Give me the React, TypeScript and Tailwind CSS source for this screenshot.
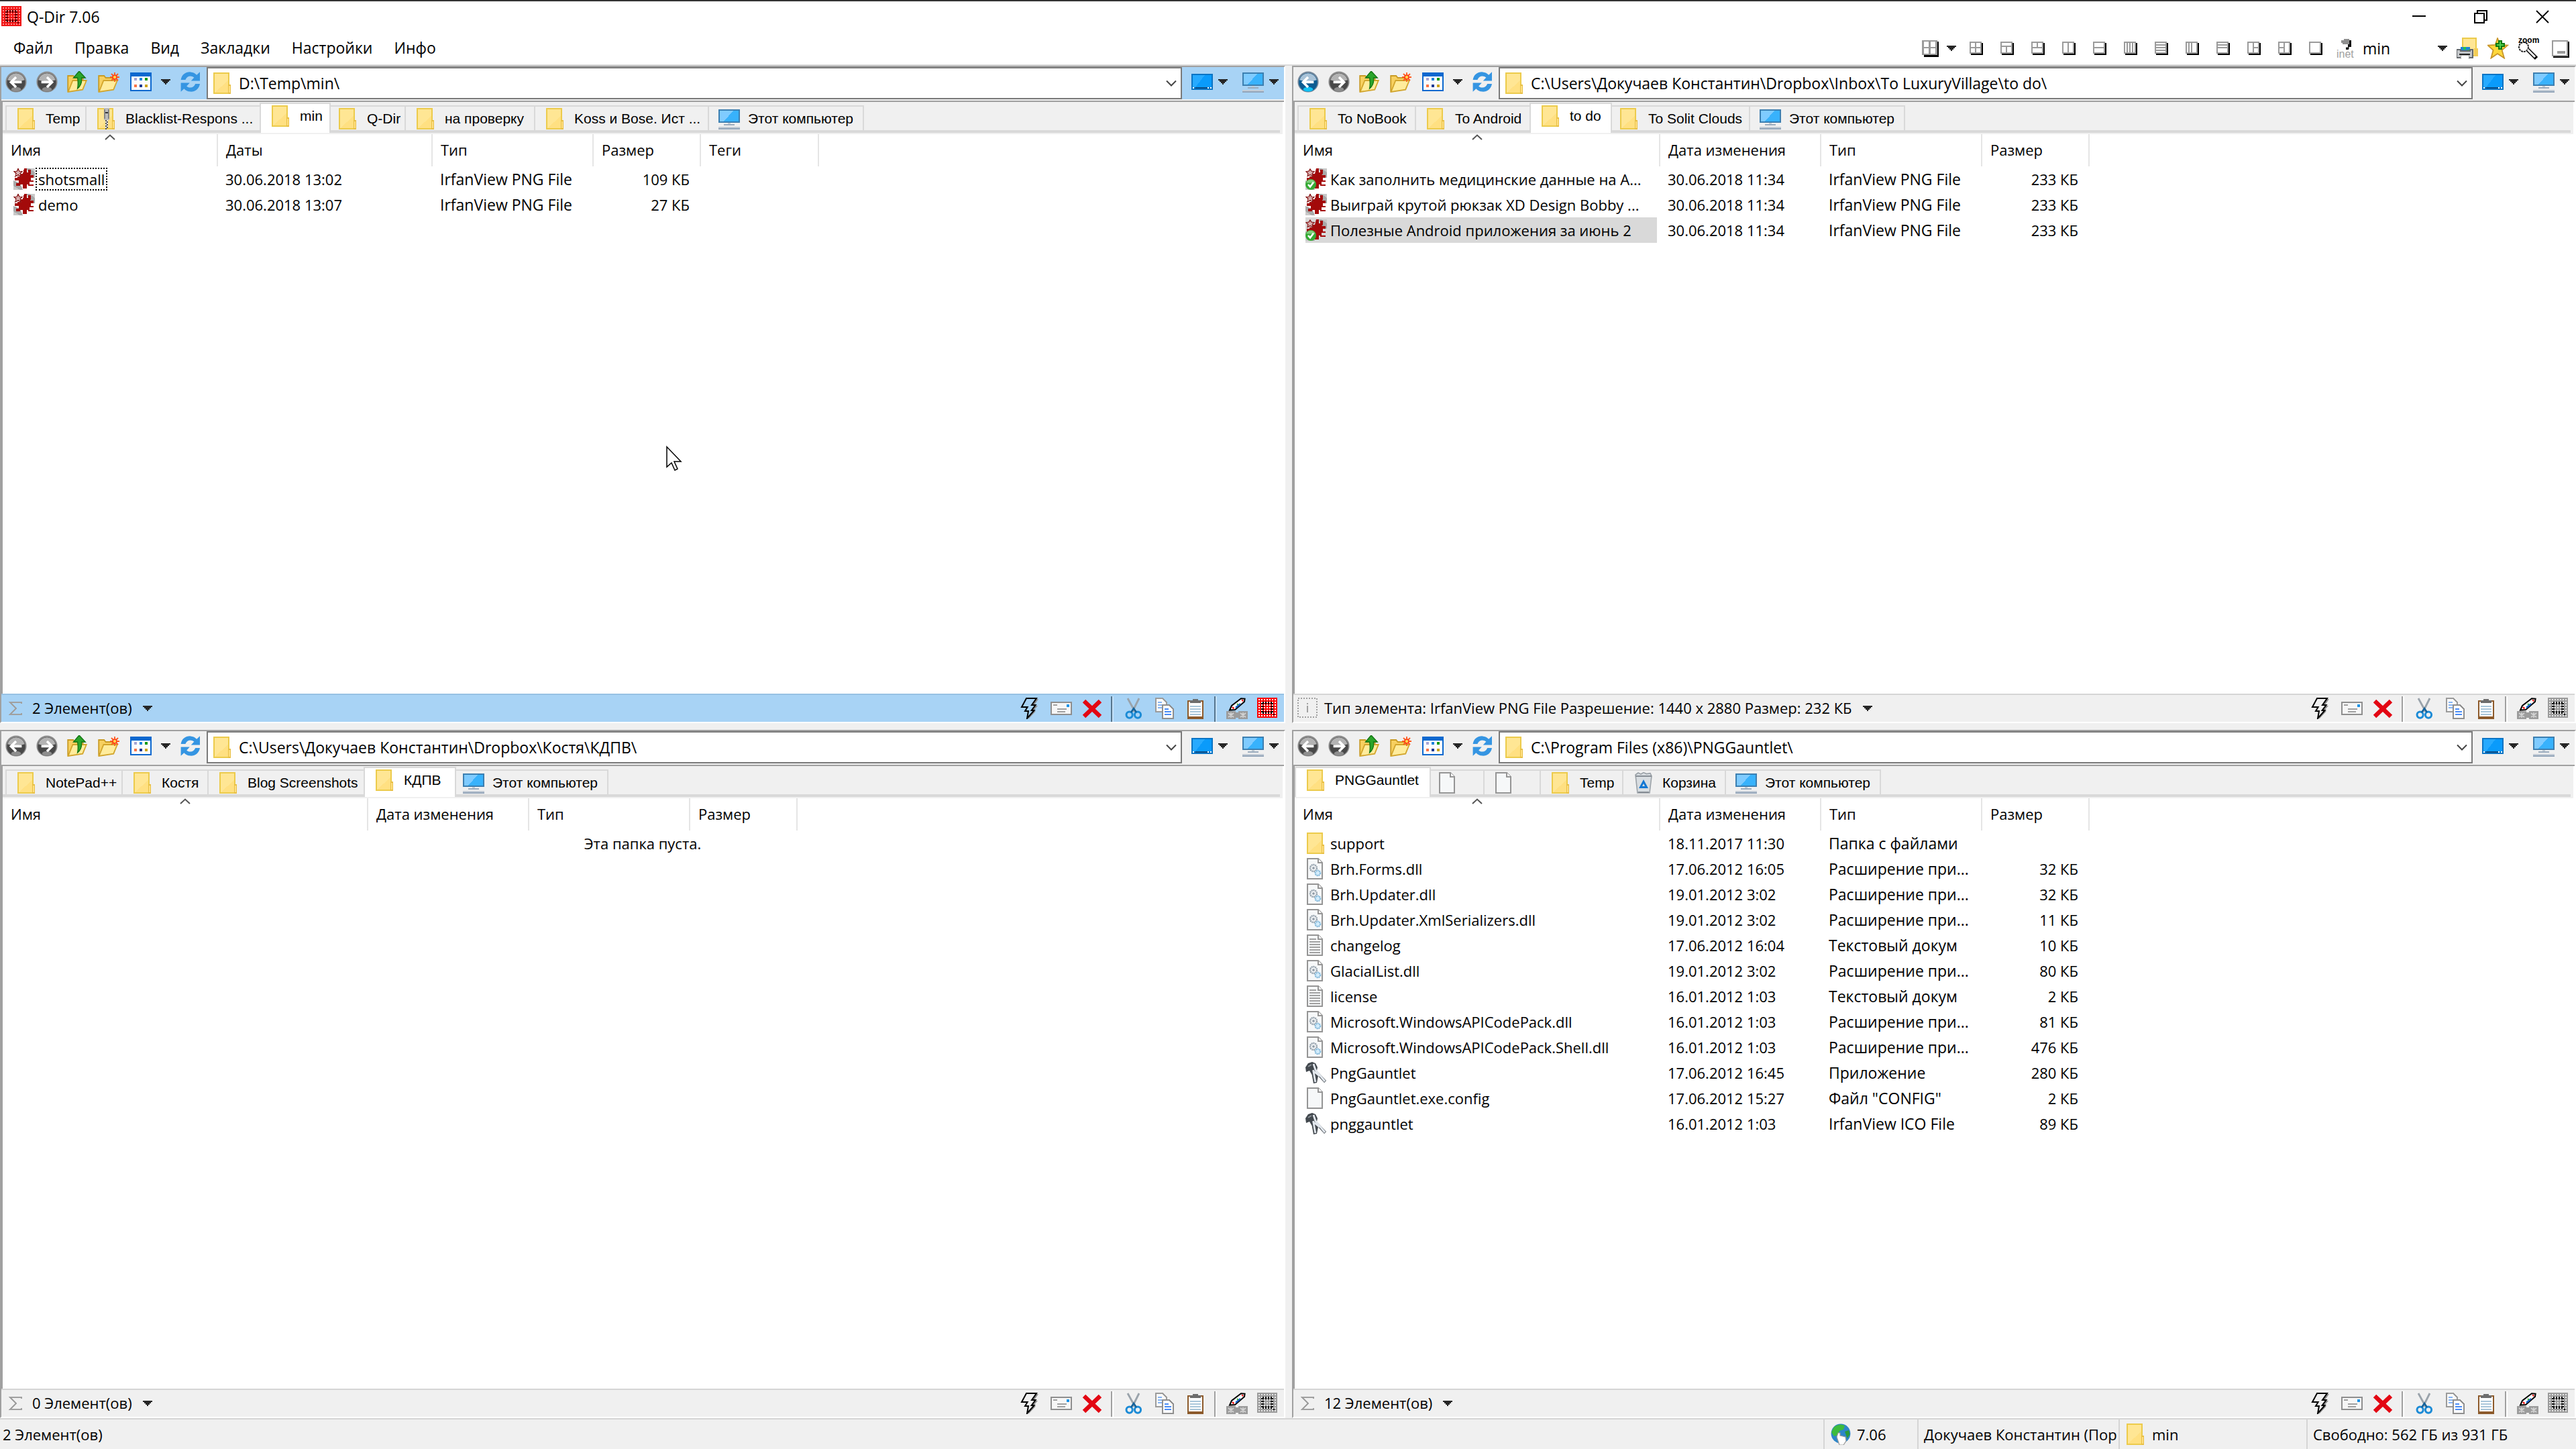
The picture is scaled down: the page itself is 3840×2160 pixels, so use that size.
import type { ReactNode } from "react";
import clsx from "clsx";

type IconName = "folder" | "zip" | "pc" | "bin" | "blank" | "dll" | "txt" | "irfan" | "irfanSynced" | "tool";

type Tab = { label: string; icon: IconName; width: string; selected?: boolean };
type Column = { title: string; width: string; sorted?: boolean };
type FileRow = { icon: IconName; name: string; date: string; type: string; size: string; state?: "focused" | "selected" };

function Svg({ children, crisp = true, className = "h-8 w-8" }: { children: ReactNode; crisp?: boolean; className?: string }) {
  return (
    <svg viewBox="0 0 16 16" className={clsx("shrink-0", className)} shapeRendering={crisp ? "crispEdges" : "auto"} aria-hidden="true">
      {children}
    </svg>
  );
}

/* ---------- file icons ---------- */

function FolderShape() {
  return (
    <>
      <path d="M1.5 .5h11v15h-11z" fill="#ffe694" stroke="#eccb4c" />
      <path d="M2 15h10V6z" fill="#ffe082" />
      <path d="M12 9h2v7h-2z" fill="#e8bf45" />
      <path d="M12.5 10h1v5h-1z" fill="#ffe084" />
    </>
  );
}

function PageShape() {
  return (
    <>
      <path d="M1.5 .5h8l3 3v12h-11z" fill="#f6f8f9" stroke="#959595" />
      <path d="M9.5 .5v3h3" fill="#fff" stroke="#959595" />
    </>
  );
}

function MonitorShape() {
  return (
    <>
      <path d="M0 1h16v10H0z" fill="#3c7fb1" />
      <path d="M1 2h14v8H1z" fill="#38b2fc" />
      <path d="M1 2h10L4 10H1z" fill="#7fcbff" />
      <path d="M7 11h2v1H7z" fill="#c5ccd3" />
      <path d="M4 12h8v1H4z" fill="#9aabbd" />
      <path d="M0 14h16v1H0z" fill="#c3ccd6" />
      <path d="M0 15h16v1H0z" fill="#93a5b9" />
    </>
  );
}

function IrfanShape() {
  return (
    <>
      <path d="M10 0h6v7l-4-1zM0 9l5 2 2 5H0z" fill="#a9a9a9" />
      <path d="M12 0h4v3zM0 13v3h5z" fill="#c9c9c9" />
      <path
        d="M8 0h2v3h1V1h2v3l-1 1h3v2h-2v2h2v1h-3v2h3v1h-4v-1h-1v3H7v-3H5v1H2v-2h2V9H1V7h2V6h2V4h2z"
        fill="#a30a0a"
      />
      <path d="M3.5 .5l1 1.6 2 .3-1.4 1.4.3 2-1.9-1-1.9 1 .3-2L.5 2.4l2-.3z" fill="#d9b0b0" stroke="#8c2222" strokeWidth=".7" />
    </>
  );
}

function FileIcon({ name }: { name: IconName }) {
  switch (name) {
    case "folder":
      return <Svg><FolderShape /></Svg>;
    case "zip":
      return (
        <Svg>
          <FolderShape />
          <path d="M6 0h4v9H6z" fill="#bcbcbc" />
          <path d="M6 1h1v7H6zM9 1h1v7H9z" fill="#858585" />
          <path d="M7 3h2v1H7z" fill="#333" />
          <path d="M7 9h1v1H7zM8 10h1v1H8zM7 11h1v1H7zM8 12h1v1H8zM7 13h1v1H7zM8 14h1v1H8zM7 15h1v1H7z" fill="#555" />
          <path d="M8 9h1v1H8zM7 10h1v1H7zM8 11h1v1H8zM7 12h1v1H7zM8 13h1v1H8zM7 14h1v1H7z" fill="#ddd" />
        </Svg>
      );
    case "pc":
      return <Svg><MonitorShape /></Svg>;
    case "bin":
      return (
        <Svg crisp={false}>
          <path d="M2 2l2-1.5 2 1 2-1.2 2.2 1L13 .8 14 3l-1.5 12.5h-9z" fill="#d8dde1" stroke="#9aa1a7" strokeWidth=".8" />
          <path d="M2 3h12M4 15h8" stroke="#878e95" />
          <path d="M8 5.5l3.500 6.500h-7z" fill="#1277d3" />
          <path d="M8 8.500l1 2H7z" fill="#d8dde1" />
        </Svg>
      );
    case "blank":
      return <Svg><PageShape /></Svg>;
    case "dll":
      return (
        <Svg crisp={false}>
          <PageShape />
          <circle cx="6" cy="7.500" r="2.500" fill="#eef1f3" stroke="#93a0ab" strokeWidth="1.200" strokeDasharray="1 .4" />
          <circle cx="6" cy="7.500" r=".9" fill="#8d99a4" />
          <circle cx="9.200" cy="11.200" r="1.900" fill="#d3ecfb" stroke="#83b9db" strokeWidth="1.100" strokeDasharray="1 .4" />
        </Svg>
      );
    case "txt":
      return (
        <Svg>
          <PageShape />
          <path d="M3 3h5v1H3zM3 5h8v1H3zM3 7h8v1H3zM3 9h8v1H3zM3 11h8v1H3zM3 13h8v1H3z" fill="#a2a2a2" />
        </Svg>
      );
    case "irfan":
      return <Svg><IrfanShape /></Svg>;
    case "irfanSynced":
      return (
        <Svg crisp={false}>
          <IrfanShape />
          <circle cx="4" cy="12" r="4" fill="#35ab35" />
          <path d="M.6 10.8a3.6 3.6 0 0 1 6.8 0z" fill="#7fcf7c" />
          <path d="M2 12l1.5 1.7L6 10.4" stroke="#fff" strokeWidth="1.3" fill="none" />
        </Svg>
      );
    case "tool":
      return (
        <Svg crisp={false}>
          <path d="M0 4l2-3 3-1 2.500 1L9 4l-.5 2.500L15.500 14l-1.500 1.500L9.500 10.500 8.500 15.500 6 16 4.800 9.500 3 6.500 .5 7.500z" fill="#43494f" />
          <path d="M6 1.500l1.500 4.500L14.500 14.500M5.800 6l1.600 9M5.500 6.500l5 4" stroke="#e3e8ee" strokeWidth="1.400" fill="none" />
          <path d="M2 3.500L4.500 2" stroke="#8d949a" />
        </Svg>
      );
  }
}

/* ---------- toolbar icons ---------- */

function Triangle() {
  return (
    <svg viewBox="0 0 14 8" className="h-2 w-3.5 shrink-0" shapeRendering="crispEdges" aria-hidden="true">
      <path d="M0 0h14v2h-2v2h-2v2H8v2H6V6H4V4H2V2H0z" fill="#262626" />
    </svg>
  );
}

function ArrowIcon({ forward, blue }: { forward?: boolean; blue?: boolean }) {
  return (
    <Svg crisp={false}>
      <circle cx="8" cy="8" r="7.800" fill={blue ? "#75889b" : "#8c8c8c"} />
      <circle cx="8" cy="8.400" r="6.900" fill={blue ? "#0c5c92" : "#484848"} />
      <path d="M1.600 6.600a6.600 6.600 0 0 1 12.800 0C11 7.800 5 7.800 1.600 6.600z" fill={blue ? "#a9c3d8" : "#b3b3b3"} />
      <ellipse cx="8" cy="13.600" rx="3.600" ry="1.700" fill={blue ? "#12c3f5" : "#8e8e8e"} />
      <path
        d={forward ? "M8 4.500L11.800 8.200 8 12M3.800 8.200h7.600" : "M8 4.500L4.200 8.200 8 12M12.200 8.200H4.600"}
        stroke="#fff"
        strokeWidth="1.800"
        fill="none"
      />
    </Svg>
  );
}

function OpenFolderShape() {
  return (
    <>
      <path d="M.6 15.400V3.500h4l1.200 1.500h6v3" fill="#f7d060" stroke="#c99b23" strokeWidth=".9" />
      <path d="M.8 15.500L4.200 7h10.200l-2.800 6.800z" fill="#ffec9c" stroke="#d2a52c" strokeWidth=".9" />
    </>
  );
}

function UpIcon() {
  return (
    <Svg crisp={false}>
      <OpenFolderShape />
      <path d="M9 0l4.600 5h-2.800c.3 3.600-.3 5.800-3 8C8.300 10.500 8.300 8 7.800 5H4.800z" fill="#2ba52b" stroke="#147514" strokeWidth=".7" />
    </Svg>
  );
}

function NewFolderIcon() {
  return (
    <Svg crisp={false}>
      <OpenFolderShape />
      <path d="M12.500 1v7M9 4.500h7M10 2l5 5M15 2l-5 5" stroke="#ff5a1f" strokeWidth=".9" />
      <circle cx="12.500" cy="4.500" r="1.500" fill="#ffd24a" stroke="#ff3b14" strokeWidth=".8" />
    </Svg>
  );
}

function ViewsIcon() {
  return (
    <Svg>
      <path d="M0 1h16v14H0z" fill="#0c68cf" />
      <path d="M1 4h14v10H1z" fill="#fdfdfd" />
      <path d="M3 5h2v2H3z" fill="#a7a5d4" />
      <path d="M7 5h2v2H7z" fill="#1b84dc" />
      <path d="M11 5h2v2h-2z" fill="#0c9a0c" />
      <path d="M3 10h2v2H3z" fill="#fb7446" />
      <path d="M7 10h2v2H7z" fill="#1c3a93" />
      <path d="M11 10h2v2h-2z" fill="#cda316" />
    </Svg>
  );
}

function RefreshIcon() {
  return (
    <Svg crisp={false}>
      <path d="M.8 6.500C1.500 2.500 4.500 .5 8 .7c2 .1 3.500 1 4.600 2.200L15 .6v6.600H8.400l2.300-2.400C8.500 3 5.500 3.300 4.200 6.500z" fill="#3595e2" />
      <path d="M15 9.500c-.7 4-3.700 6-7.200 5.800-2-.1-3.500-1-4.600-2.200L.8 15.400V8.800h6.600l-2.300 2.400c2.200 1.800 5.200 1.500 6.500-1.700z" fill="#3595e2" />
    </Svg>
  );
}

function DesktopIcon() {
  return (
    <Svg>
      <path d="M0 2h16v12H0z" fill="#0a74c4" />
      <path d="M1 3h14v9H1z" fill="#0a9bfb" />
      <path d="M1 3h9L3 12H1z" fill="#27aaff" />
      <path d="M1 12h1v1H1zM12 12h1v1h-1zM14 12h1v1h-1z" fill="#fff" />
      <path d="M3 12h9v1H3z" fill="#0b4d86" />
    </Svg>
  );
}

function BoltIcon() {
  return (
    <Svg crisp={false}>
      <path d="M6 1h8l-3.500 5h3L10 10h2l-5.500 6 1-5H5.500L7 7.500H3z" fill="#8b8b8b" />
      <path d="M5 .5h7.500L9 5.500h2.800L8.800 9.500h2L5.500 15.500l1-5.500H4l1.800-3H1.500z" className="fill-inherit" stroke="#000" />
    </Svg>
  );
}

function MailIcon() {
  return (
    <Svg>
      <path d="M.5 3.500h15v9H.5z" fill="#f6f6f6" stroke="#8f8f8f" />
      <path d="M2 5h3v1H2zM5 8h7v1H5zM5 10h6v1H5z" fill="#a0a0a0" />
      <path d="M12 5h2v2h-2z" fill="#1e94e8" />
    </Svg>
  );
}

function DeleteIcon() {
  return (
    <Svg crisp={false}>
      <path d="M2 2.500L14 14M14 2.500L2 14" stroke="#e30613" strokeWidth="3.200" />
    </Svg>
  );
}

function CutIcon() {
  return (
    <Svg crisp={false}>
      <path d="M3.500 .5L9 10.500M12 .5L7 10.500" stroke="#9aa3ab" strokeWidth="1.400" />
      <circle cx="4.800" cy="12.800" r="2.300" fill="none" stroke="#1c8bd6" strokeWidth="1.500" />
      <circle cx="11" cy="12.800" r="2.300" fill="none" stroke="#1c8bd6" strokeWidth="1.500" />
      <path d="M6 11l2-3 2 3" stroke="#14639c" strokeWidth="1.300" fill="none" />
    </Svg>
  );
}

function CopyIcon() {
  return (
    <Svg>
      <path d="M1.500 .5h5l3 3v7h-8z" fill="#fafafa" stroke="#9b9b9b" />
      <path d="M3 3h3v1H3zM3 5h4v1H3zM3 7h3v1H3z" fill="#86b4f3" />
      <path d="M6.500 5.500h5l3 3v7h-8z" fill="#fff" stroke="#8f8f8f" />
      <path d="M8 8h3v1H8zM8 10h5v1H8zM8 12h5v1H8z" fill="#4a8cf5" />
    </Svg>
  );
}

function PasteIcon() {
  return (
    <Svg>
      <path d="M2 2h12v14H2z" fill="#8c5a2b" />
      <path d="M3 3h10v11H3z" fill="#fff" />
      <path d="M4 6h8v1H4zM4 8h8v1H4zM4 10h8v1H4zM4 12h8v1H4z" fill="#a9c6da" />
      <path d="M4 2h2V1h4v1h2v2H4z" fill="#6d6d6d" />
    </Svg>
  );
}

function PenIcon() {
  return (
    <Svg crisp={false}>
      <path d="M2.500 9.300l1.500-3.300L11 .6l2.800.2-.3 2.200L6.500 9z" fill="#fff" stroke="#000" />
      <path d="M4.500 7l1.200 1.200" stroke="#e11" strokeWidth="1.200" />
      <path d="M7 7.500l3.500-3" stroke="#1660c8" strokeWidth="1.200" />
      <path d="M8 4.500l.8.800" stroke="#2a2" strokeWidth=".9" />
      <path d="M11.600 1.600l1 1" stroke="#e11" />
      <path d="M0 10h7v1h2v-1h7v6H9v-1H7v1H0z" fill="#9c9c9c" />
      <path d="M1.500 11.500l4 3M5.500 11.500l-4 3M10.500 11.500l4 3M14.500 11.500l-4 3M3.500 11v4M12.500 11v4" stroke="#d5d5d5" strokeWidth=".8" />
    </Svg>
  );
}

// 7x7 dots inside a square with a dotted Q, the Q-Dir mark
function DotGrid({ bg, dot, ring }: { bg: string; dot: string; ring: string }) {
  const odd = [1, 3, 5, 7, 9, 11, 13];
  const even = [4, 6, 8, 10];
  return (
    <Svg>
      <path d="M0 0h15v15H0z" fill={bg} />
      {odd.map((y) => odd.map((x) => <path key={`${x}-${y}`} d={`M${x} ${y}h1v1h-1z`} fill={dot} />))}
      {even.map((n) => (
        <path
          key={n}
          d={`M${n} 3h1v1h-1zM${n} 4h1v1h-1zM${n} 10h1v1h-1zM${n} 11h1v1h-1zM3 ${n}h1v1h-1zM4 ${n}h1v1h-1zM10 ${n}h1v1h-1zM11 ${n}h1v1h-1z`}
          fill={ring}
        />
      ))}
      <path d="M12 12h1v1h-1z" fill={ring} />
    </Svg>
  );
}

function LayoutIcon({ lines, large }: { lines: string; large?: boolean }) {
  return (
    <Svg className={clsx("h-8 w-8", large && "scale-125")}>
      <path d="M4 12h9v1H4zM12 4h1v9h-1z" fill="#000" />
      <path d="M3.500 3.500h8v8h-8z" fill="#fff" stroke="#9b9b9b" />
      <path d={lines} stroke="#9b9b9b" fill="none" />
    </Svg>
  );
}

/* ---------- panes ---------- */

function ToolButton({ label, children }: { label: string; children: ReactNode }) {
  return (
    <button type="button" aria-label={label} className="flex shrink-0 items-center gap-2">
      {children}
    </button>
  );
}

function Toolbar({ address, active, canGoBack }: { address: string; active?: boolean; canGoBack?: boolean }) {
  return (
    <div className={clsx("flex h-12 shrink-0", active ? "bg-[#a8d3f5]" : "bg-[#f0f0f0]")}>
      <div className="flex items-center gap-3.5 pr-2 pb-1 pl-1.5">
        <ToolButton label="Назад"><ArrowIcon blue={canGoBack} /></ToolButton>
        <ToolButton label="Вперёд"><ArrowIcon forward /></ToolButton>
        <ToolButton label="Вверх"><UpIcon /></ToolButton>
        <ToolButton label="Новая папка"><NewFolderIcon /></ToolButton>
        <ToolButton label="Представление">
          <span className="flex items-center gap-3.5 pl-0.5"><ViewsIcon /><Triangle /></span>
        </ToolButton>
        <ToolButton label="Обновить"><RefreshIcon /></ToolButton>
      </div>
      <div className="flex min-w-0 flex-1 items-center border-2 border-[#7a7a7a] bg-white px-1.5">
        <FileIcon name="folder" />
        <input aria-label="Адрес" defaultValue={address} className="min-w-0 flex-1 bg-transparent px-2 text-[23px] outline-none" />
        <svg viewBox="0 0 16 10" className="h-2.5 w-4 shrink-0" aria-hidden="true">
          <path d="M1 1.500l7 7 7-7" fill="none" stroke="#444" strokeWidth="2" />
        </svg>
      </div>
      <div className="flex items-center gap-[22px] pr-2 pb-1 pl-3.5">
        <ToolButton label="Рабочий стол"><DesktopIcon /><Triangle /></ToolButton>
        <ToolButton label="Компьютер"><Svg><MonitorShape /></Svg><Triangle /></ToolButton>
      </div>
    </div>
  );
}

function Tabs({ tabs }: { tabs: Tab[] }) {
  return (
    <div className="h-12 shrink-0 bg-[#f0f0f0]">
      <div role="tablist" className="mr-1 flex h-[46px] items-end border-b-4 border-[#d9d9d9] pl-1 font-['Liberation_Sans',sans-serif] text-[21px]">
        {tabs.map((tab, i) => (
          <button
            key={i}
            type="button"
            role="tab"
            aria-selected={!!tab.selected}
            className={clsx(
              "flex shrink-0 items-center gap-3 overflow-hidden border-[#d9d9d9] whitespace-nowrap",
              tab.width,
              tab.selected ? "relative -mx-1 -mb-1 h-[45px] border-x-2 border-t-2 bg-white pb-2 pl-3.5" : "h-[37px] border-t-2 border-r-2 pl-3.5",
              i === 0 && !tab.selected && "border-l-2",
            )}
          >
            <FileIcon name={tab.icon} />
            {tab.label}
          </button>
        ))}
      </div>
    </div>
  );
}

function FileTable({ columns, rows }: { columns: Column[]; rows: FileRow[] }) {
  return (
    <table className="w-max table-fixed border-collapse text-left">
      <colgroup>
        {columns.map((c) => <col key={c.title} className={c.width} />)}
      </colgroup>
      <thead>
        <tr className="h-12">
          {columns.map((c) => (
            <th key={c.title} className={clsx("relative border-r-2 border-[#e5e5e5] pb-0.5 pl-3 font-normal", c.width)}>
              {c.title}
              {c.sorted && (
                <svg viewBox="0 0 16 9" className="absolute top-0 left-1/2 h-[9px] w-4 -translate-x-1/2" aria-hidden="true">
                  <path d="M1 8l7-6.500L15 8" fill="none" stroke="#555" strokeWidth="2" />
                </svg>
              )}
            </th>
          ))}
        </tr>
      </thead>
      <tbody>
        {rows.map((r) => (
          <tr key={r.name} className="h-[38px] whitespace-nowrap">
            <td className="overflow-hidden py-0 pr-1 pl-4">
              <div className={clsx("flex h-[38px] items-center gap-px", r.state === "selected" && "bg-[#d9d9d9]")}>
                <FileIcon name={r.icon} />
                <span className={clsx("border-2 px-0.5 leading-[30px]", r.state === "focused" ? "border-dotted border-black" : "border-transparent")}>
                  {r.name}
                </span>
              </div>
            </td>
            <td className="overflow-hidden pl-3">{r.date}</td>
            <td className="overflow-hidden pl-3 text-[23px]">{r.type}</td>
            <td className="overflow-hidden pr-4 text-right">{r.size}</td>
          </tr>
        ))}
      </tbody>
    </table>
  );
}

function StatusBar({ text, info, active }: { text: string; info?: boolean; active?: boolean }) {
  const divider = clsx("-ml-0.5 h-[38px] w-1 self-end border-l-2", active ? "border-[#56758d] bg-[#c4e1f8]" : "border-[#a0a0a0] bg-white");
  return (
    <div
      className={clsx(
        "flex h-[42px] shrink-0 items-center justify-between border-t-2 pr-2 pl-1.5",
        active ? "border-[#97c1e3] bg-[#a8d3f5] fill-[#a8d3f5]" : "border-[#d5d5d5] bg-[#f0f0f0] fill-[#f0f0f0]",
      )}
    >
      <button type="button" className="flex items-center">
        {info ? (
          <Svg>
            <path d="M.5 .5h14v14H.5z" fill="none" stroke="#a0a0a0" strokeDasharray="1 1" />
            <path d="M7 4h1v1H7zM7 6h1v5H7z" fill="#a0a0a0" />
          </Svg>
        ) : (
          <Svg>
            <path d="M12 4.500V3.500H3.500L8 8l-4.500 4.500H12v-1" fill="none" stroke="#a0a0a0" />
          </Svg>
        )}
        <span className="pr-4 pb-0.5 pl-2">{text}</span>
        <Triangle />
      </button>
      <div className="flex h-full items-center gap-3.5">
        <ToolButton label="Выполнить"><BoltIcon /></ToolButton>
        <ToolButton label="Почта"><MailIcon /></ToolButton>
        <ToolButton label="Удалить"><DeleteIcon /></ToolButton>
        <span className={divider} />
        <ToolButton label="Вырезать"><CutIcon /></ToolButton>
        <ToolButton label="Копировать"><CopyIcon /></ToolButton>
        <ToolButton label="Вставить"><PasteIcon /></ToolButton>
        <span className={divider} />
        <ToolButton label="Цвета"><PenIcon /></ToolButton>
        <ToolButton label="Q-Dir">
          {active ? <DotGrid bg="#fe0000" dot="#fff" ring="#000" /> : <DotGrid bg="#9b9b9b" dot="#e6e6e6" ring="#111" />}
        </ToolButton>
      </div>
    </div>
  );
}

type PaneProps = {
  address: string;
  tabs: Tab[];
  columns: Column[];
  rows: FileRow[];
  status: string;
  active?: boolean;
  canGoBack?: boolean;
  info?: boolean;
};

function Pane({ address, tabs, columns, rows, status, active, canGoBack, info }: PaneProps) {
  return (
    <section className="flex min-h-0 min-w-0 flex-col border-2 border-t-[#a0a0a0] border-r-white border-b-white border-l-[#a0a0a0] bg-[#f0f0f0]">
      <Toolbar address={address} active={active} canGoBack={canGoBack} />
      <div className="mt-0.5 flex min-h-0 flex-1 flex-col border-t-2 border-l-2 border-[#a0a0a0] bg-white pr-0.5">
        <Tabs tabs={tabs} />
        <FileTable columns={columns} rows={rows} />
        {rows.length === 0 && <p className="text-center leading-[38px]">Эта папка пуста.</p>}
      </div>
      <StatusBar text={status} info={info} active={active} />
    </section>
  );
}

/* ---------- data ---------- */

const layouts = [
  "M7.500 4v7M4 7.500h7",
  "M4 6.500h7M7.500 7v4",
  "M4 7.500h7M7.500 4v3",
  "M7.500 4v7",
  "M4 7.500h7",
  "M5.500 4v7M7.500 4v7M9.500 4v7",
  "M4 5.500h7M4 7.500h7M4 9.500h7",
  "M5.500 4v7M7.500 4v7",
  "M4 5.500h7M4 7.500h7",
  "M7.500 4v7M8 7.500h3",
  "M4 7.500h3M7.500 4v7",
  "",
];

const menu = ["Файл", "Правка", "Вид", "Закладки", "Настройки", "Инфо"];

const defaultColumns: Column[] = [
  { title: "Имя", width: "w-[544px]", sorted: true },
  { title: "Дата изменения", width: "w-[240px]" },
  { title: "Тип", width: "w-[240px]" },
  { title: "Размер", width: "w-[160px]" },
];

const png = "IrfanView PNG File";
const ext = "Расширение при...";

const panes: PaneProps[] = [
  {
    active: true,
    address: "D:\\Temp\\min\\",
    status: "2 Элемент(ов)",
    tabs: [
      { label: "Temp", icon: "folder", width: "w-[121px]" },
      { label: "Blacklist-Respons ...", icon: "zip", width: "w-[262px]" },
      { label: "min", icon: "folder", width: "w-[106px]", selected: true },
      { label: "Q-Dir", icon: "folder", width: "w-[116px]" },
      { label: "на проверку", icon: "folder", width: "w-[193px]" },
      { label: "Koss и Bose. Ист ...", icon: "folder", width: "w-[259px]" },
      { label: "Этот компьютер", icon: "pc", width: "w-[231px]" },
    ],
    columns: [
      { title: "Имя", width: "w-[320px]", sorted: true },
      { title: "Даты", width: "w-[320px]" },
      { title: "Тип", width: "w-[240px]" },
      { title: "Размер", width: "w-[160px]" },
      { title: "Теги", width: "w-[176px]" },
    ],
    rows: [
      { icon: "irfan", name: "shotsmall", date: "30.06.2018 13:02", type: png, size: "109 КБ", state: "focused" },
      { icon: "irfan", name: "demo", date: "30.06.2018 13:07", type: png, size: "27 КБ" },
    ],
  },
  {
    canGoBack: true,
    info: true,
    address: "C:\\Users\\Докучаев Константин\\Dropbox\\Inbox\\To LuxuryVillage\\to do\\",
    status: "Тип элемента: IrfanView PNG File Разрешение: 1440 x 2880 Размер: 232 КБ",
    tabs: [
      { label: "To NoBook", icon: "folder", width: "w-[177px]" },
      { label: "To Android", icon: "folder", width: "w-[173px]" },
      { label: "to do", icon: "folder", width: "w-[123px]", selected: true },
      { label: "To Solit Clouds", icon: "folder", width: "w-[210px]" },
      { label: "Этот компьютер", icon: "pc", width: "w-[231px]" },
    ],
    columns: defaultColumns,
    rows: [
      { icon: "irfanSynced", name: "Как заполнить медицинские данные на A...", date: "30.06.2018 11:34", type: png, size: "233 КБ" },
      { icon: "irfan", name: "Выиграй крутой рюкзак XD Design Bobby ...", date: "30.06.2018 11:34", type: png, size: "233 КБ" },
      { icon: "irfanSynced", name: "Полезные Android приложения за июнь 2", date: "30.06.2018 11:34", type: png, size: "233 КБ", state: "selected" },
    ],
  },
  {
    address: "C:\\Users\\Докучаев Константин\\Dropbox\\Костя\\КДПВ\\",
    status: "0 Элемент(ов)",
    tabs: [
      { label: "NotePad++", icon: "folder", width: "w-[175px]" },
      { label: "Костя", icon: "folder", width: "w-[128px]" },
      { label: "Blog Screenshots", icon: "folder", width: "w-[235px]" },
      { label: "КДПВ", icon: "folder", width: "w-[138px]", selected: true },
      { label: "Этот компьютер", icon: "pc", width: "w-[231px]" },
    ],
    columns: defaultColumns,
    rows: [],
  },
  {
    address: "C:\\Program Files (x86)\\PNGGauntlet\\",
    status: "12 Элемент(ов)",
    tabs: [
      { label: "PNGGauntlet", icon: "folder", width: "w-[203px]", selected: true },
      { label: "", icon: "blank", width: "w-[84px]" },
      { label: "", icon: "blank", width: "w-[84px]" },
      { label: "Temp", icon: "folder", width: "w-[123px]" },
      { label: "Корзина", icon: "bin", width: "w-[153px]" },
      { label: "Этот компьютер", icon: "pc", width: "w-[231px]" },
    ],
    columns: defaultColumns,
    rows: [
      { icon: "folder", name: "support", date: "18.11.2017 11:30", type: "Папка с файлами", size: "" },
      { icon: "dll", name: "Brh.Forms.dll", date: "17.06.2012 16:05", type: ext, size: "32 КБ" },
      { icon: "dll", name: "Brh.Updater.dll", date: "19.01.2012 3:02", type: ext, size: "32 КБ" },
      { icon: "dll", name: "Brh.Updater.XmlSerializers.dll", date: "19.01.2012 3:02", type: ext, size: "11 КБ" },
      { icon: "txt", name: "changelog", date: "17.06.2012 16:04", type: "Текстовый докум", size: "10 КБ" },
      { icon: "dll", name: "GlacialList.dll", date: "19.01.2012 3:02", type: ext, size: "80 КБ" },
      { icon: "txt", name: "license", date: "16.01.2012 1:03", type: "Текстовый докум", size: "2 КБ" },
      { icon: "dll", name: "Microsoft.WindowsAPICodePack.dll", date: "16.01.2012 1:03", type: ext, size: "81 КБ" },
      { icon: "dll", name: "Microsoft.WindowsAPICodePack.Shell.dll", date: "16.01.2012 1:03", type: ext, size: "476 КБ" },
      { icon: "tool", name: "PngGauntlet", date: "17.06.2012 16:45", type: "Приложение", size: "280 КБ" },
      { icon: "blank", name: "PngGauntlet.exe.config", date: "17.06.2012 15:27", type: "Файл \"CONFIG\"", size: "2 КБ" },
      { icon: "tool", name: "pnggauntlet", date: "16.01.2012 1:03", type: "IrfanView ICO File", size: "89 КБ" },
    ],
  },
];

/* ---------- window ---------- */

function TitleBar() {
  return (
    <header className="flex h-[46px] items-center justify-between pr-1 pl-0.5 text-[23px]">
      <h1 className="flex items-center gap-1.5">
        <DotGrid bg="#f01414" dot="#ff8a8a" ring="#5a0000" />
        Q-Dir 7.06
      </h1>
      <div className="flex">
        <button type="button" aria-label="Свернуть" className="flex w-[92px] justify-center">
          <svg viewBox="0 0 20 20" className="h-5 w-5"><path d="M0 9h20" stroke="#000" strokeWidth="2" /></svg>
        </button>
        <button type="button" aria-label="Восстановить" className="flex w-[92px] justify-center">
          <svg viewBox="0 0 20 20" className="h-5 w-5">
            <path d="M1 5h14v14H1zM5 5V1h14v14h-4" fill="none" stroke="#000" strokeWidth="2" />
          </svg>
        </button>
        <button type="button" aria-label="Закрыть" className="flex w-[92px] justify-center">
          <svg viewBox="0 0 20 20" className="h-5 w-5"><path d="M1 1l18 18M19 1L1 19" stroke="#000" strokeWidth="1.800" /></svg>
        </button>
      </div>
    </header>
  );
}

function MenuBar() {
  return (
    <div className="box-content flex h-12 items-center justify-between border-b-2 border-[#d9d9d9] pr-2 pl-1 text-[23px]">
      <nav className="flex pb-0.5">
        {menu.map((m) => <button key={m} type="button" className="px-4">{m}</button>)}
      </nav>
      <div className="flex items-center gap-3.5">
        <ToolButton label="Разметка"><LayoutIcon large lines={layouts[0]} /><Triangle /></ToolButton>
        {layouts.map((l, i) => <ToolButton key={i} label={`Разметка ${i + 1}`}><LayoutIcon lines={l} /></ToolButton>)}
        <ToolButton label="Интернет">
          <svg viewBox="0 0 32 32" className="h-8 w-8" aria-hidden="true">
            <path d="M8 4h4V2h8v2h3v10h-3v3h-5v-3h3v-4h-8V8H8z" fill="#8f8f8f" />
            <path d="M20 4h3v10h-4v4h-4v-3h3v-5h2z" fill="#111" />
            <text x="1" y="30" fontSize="16" fill="#a0a0a0" fontFamily="Liberation Sans, sans-serif">inet</text>
          </svg>
        </ToolButton>
        <div className="relative -ml-2 flex w-32 items-center">
          <select aria-label="Избранное" className="w-full appearance-none bg-transparent px-0.5 outline-none">
            <option>min</option>
          </select>
          <span className="pointer-events-none absolute right-0"><Triangle /></span>
        </div>
        <ToolButton label="Печать">
          <Svg>
            <path d="M4.500 .5h10v13h-10z" fill="#ffe694" stroke="#eccb4c" />
            <path d="M13 8h3v6h-3z" fill="#f3cd57" />
            <path d="M3 7h7v4H3z" fill="#1d85d8" />
            <path d="M5 7h2v2H5zM8 9h2v1H8z" fill="#27c04c" />
            <path d="M0 9h3v1h7V9h2v6H0z" fill="#c4c7ca" stroke="#63676b" strokeWidth=".6" />
            <path d="M2 12h8v1H2z" fill="#222" />
            <path d="M3 13h6v3H3z" fill="#fff" stroke="#999" strokeWidth=".4" />
          </Svg>
        </ToolButton>
        <ToolButton label="В избранное">
          <Svg crisp={false}>
            <path d="M7.500 .5l2 5 5.500.3-4.200 3.600 1.700 5.900-5-3.300-4.800 3.300 1.600-5.900L.3 5.800l5.500-.3z" fill="#ffd83c" stroke="#c9962a" strokeWidth=".9" />
            <path d="M8 2h3v2h2v3h-2v2H8V7H6V4h2z" fill="#117a11" />
            <path d="M9 3h1v2h2v1h-2v2H9V6H7V5h2z" fill="#4fd04f" />
          </Svg>
        </ToolButton>
        <ToolButton label="Лупа">
          <svg viewBox="0 0 32 32" className="h-8 w-8 overflow-visible" aria-hidden="true">
            <circle cx="8" cy="14" r="7" fill="#fff" stroke="#222" strokeWidth="2" strokeDasharray="3 1" />
            <text x="0" y="8" fontSize="12" fontWeight="bold" fontFamily="Liberation Sans, sans-serif">zoom</text>
            <path d="M14 18l13 13" stroke="#000" strokeWidth="6" />
            <path d="M14 18l11 11" stroke="#fff" strokeWidth="3" />
          </svg>
        </ToolButton>
        <ToolButton label="Окно">
          <Svg>
            <path d="M3 14h12v1H3zM14 3h1v12h-1z" fill="#000" />
            <path d="M2.500 2.500h11v11h-11z" fill="#fff" stroke="#9b9b9b" />
            <path d="M6 10h6v2H6z" fill="#9b9b9b" />
          </Svg>
        </ToolButton>
      </div>
    </div>
  );
}

function GlobalStatus() {
  return (
    <footer className="flex h-[46px] items-stretch overflow-hidden border-t-2 border-[#d5d5d5] bg-[#f0f0f0] whitespace-nowrap *:flex *:items-center *:overflow-hidden *:border-[#d5d5d5]">
      <div className="flex-1 pl-1">2 Элемент(ов)</div>
      <div className="w-[140px] gap-2 border-l-2 pl-2">
        <Svg crisp={false}>
          <circle cx="8" cy="7.500" r="7.200" fill="#2d86c9" />
          <path d="M3 2.500Q7-.5 11 1.500l-1 3-3 1-1 3-3 1-2-3z" fill="#3dbb3d" />
          <path d="M11 6l3-1 .8 3-2 3z" fill="#2a9a3a" />
          <path d="M5 10l1-3h1.500v2l4 1 .5 3-2 3H7z" fill="#fff" stroke="#999" strokeWidth=".6" />
        </Svg>
        7.06
      </div>
      <div className="w-[300px] border-l-2 pl-2">Докучаев Константин (Пор</div>
      <div className="w-[280px] gap-2 border-l-2 pl-2"><FileIcon name="folder" />min</div>
      <div className="w-[402px] border-l-2 pl-2">Свободно: 562 ГБ из 931 ГБ</div>
    </footer>
  );
}

export default function App() {
  return (
    <div className="relative flex h-screen flex-col overflow-hidden border-t-2 border-[#333] bg-white font-['Open_Sans',sans-serif] text-[22px] leading-8 text-black">
      <TitleBar />
      <MenuBar />
      <main className="grid min-h-0 flex-1 grid-cols-[1916fr_1914fr] grid-rows-[980fr_1026fr] gap-2.5 bg-[#f0f0f0]">
        {panes.map((p) => <Pane key={p.address} {...p} />)}
      </main>
      <GlobalStatus />
      <svg viewBox="0 0 24 38" className="pointer-events-none absolute top-[662px] left-[993px] h-[38px] w-6" aria-hidden="true">
        <path d="M1 2v30l7-6 5 11 4-2-5-11h10z" fill="#fff" stroke="#000" strokeWidth="1.500" />
      </svg>
    </div>
  );
}
